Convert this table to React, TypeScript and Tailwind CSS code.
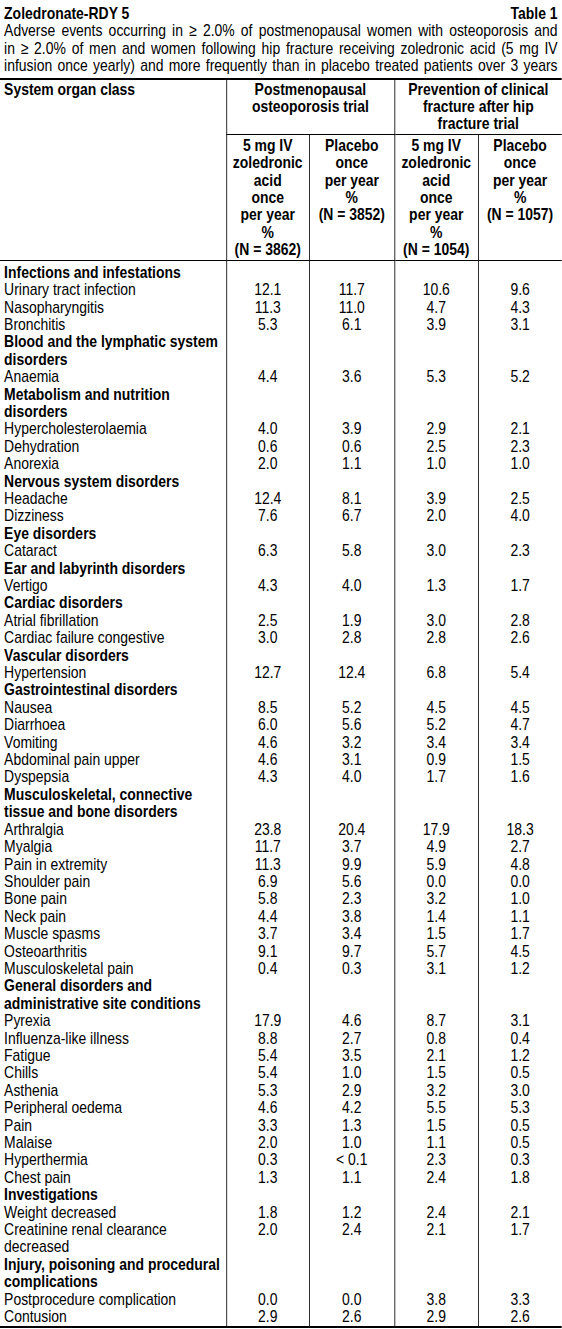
import React from "react";

type Row =
  | { kind: "cat"; lines: string[] }
  | { kind: "item"; lines: string[]; v: [string, string, string, string] };

const cat = (...lines: string[]): Row => ({ kind: "cat", lines });
const item = (label: string | string[], a: string, b: string, c: string, d: string): Row => ({
  kind: "item",
  lines: Array.isArray(label) ? label : [label],
  v: [a, b, c, d],
});

const rows: Row[] = [
  cat("Infections and infestations"),
  item("Urinary tract infection", "12.1", "11.7", "10.6", "9.6"),
  item("Nasopharyngitis", "11.3", "11.0", "4.7", "4.3"),
  item("Bronchitis", "5.3", "6.1", "3.9", "3.1"),
  cat("Blood and the lymphatic system", "disorders"),
  item("Anaemia", "4.4", "3.6", "5.3", "5.2"),
  cat("Metabolism and nutrition", "disorders"),
  item("Hypercholesterolaemia", "4.0", "3.9", "2.9", "2.1"),
  item("Dehydration", "0.6", "0.6", "2.5", "2.3"),
  item("Anorexia", "2.0", "1.1", "1.0", "1.0"),
  cat("Nervous system disorders"),
  item("Headache", "12.4", "8.1", "3.9", "2.5"),
  item("Dizziness", "7.6", "6.7", "2.0", "4.0"),
  cat("Eye disorders"),
  item("Cataract", "6.3", "5.8", "3.0", "2.3"),
  cat("Ear and labyrinth disorders"),
  item("Vertigo", "4.3", "4.0", "1.3", "1.7"),
  cat("Cardiac disorders"),
  item("Atrial fibrillation", "2.5", "1.9", "3.0", "2.8"),
  item("Cardiac failure congestive", "3.0", "2.8", "2.8", "2.6"),
  cat("Vascular disorders"),
  item("Hypertension", "12.7", "12.4", "6.8", "5.4"),
  cat("Gastrointestinal disorders"),
  item("Nausea", "8.5", "5.2", "4.5", "4.5"),
  item("Diarrhoea", "6.0", "5.6", "5.2", "4.7"),
  item("Vomiting", "4.6", "3.2", "3.4", "3.4"),
  item("Abdominal pain upper", "4.6", "3.1", "0.9", "1.5"),
  item("Dyspepsia", "4.3", "4.0", "1.7", "1.6"),
  cat("Musculoskeletal, connective", "tissue and bone disorders"),
  item("Arthralgia", "23.8", "20.4", "17.9", "18.3"),
  item("Myalgia", "11.7", "3.7", "4.9", "2.7"),
  item("Pain in extremity", "11.3", "9.9", "5.9", "4.8"),
  item("Shoulder pain", "6.9", "5.6", "0.0", "0.0"),
  item("Bone pain", "5.8", "2.3", "3.2", "1.0"),
  item("Neck pain", "4.4", "3.8", "1.4", "1.1"),
  item("Muscle spasms", "3.7", "3.4", "1.5", "1.7"),
  item("Osteoarthritis", "9.1", "9.7", "5.7", "4.5"),
  item("Musculoskeletal pain", "0.4", "0.3", "3.1", "1.2"),
  cat("General disorders and", "administrative site conditions"),
  item("Pyrexia", "17.9", "4.6", "8.7", "3.1"),
  item("Influenza-like illness", "8.8", "2.7", "0.8", "0.4"),
  item("Fatigue", "5.4", "3.5", "2.1", "1.2"),
  item("Chills", "5.4", "1.0", "1.5", "0.5"),
  item("Asthenia", "5.3", "2.9", "3.2", "3.0"),
  item("Peripheral oedema", "4.6", "4.2", "5.5", "5.3"),
  item("Pain", "3.3", "1.3", "1.5", "0.5"),
  item("Malaise", "2.0", "1.0", "1.1", "0.5"),
  item("Hyperthermia", "0.3", "< 0.1", "2.3", "0.3"),
  item("Chest pain", "1.3", "1.1", "2.4", "1.8"),
  cat("Investigations"),
  item("Weight decreased", "1.8", "1.2", "2.4", "2.1"),
  item(["Creatinine renal clearance", "decreased"], "2.0", "2.4", "2.1", "1.7"),
  cat("Injury, poisoning and procedural", "complications"),
  item("Postprocedure complication", "0.0", "0.0", "3.8", "3.3"),
  item("Contusion", "2.9", "2.6", "2.9", "2.6"),
];

const Lines = ({ lines }: { lines: string[] }) => (
  <>
    {lines.map((l, i) => (
      <React.Fragment key={i}>
        {i > 0 && <br />}
        {l}
      </React.Fragment>
    ))}
  </>
);

const subHead = "border-l-[1.25px] border-b-[1.25px] border-black pt-[2px] pb-[1px] align-top font-bold whitespace-nowrap";

export default function App() {
  return (
    <div className="w-[562px] h-[1329px] overflow-hidden bg-white">
      {/* Arial-metric text compressed horizontally to match the condensed face */}
      <div className="w-[685px] origin-top-left scale-x-[0.82] text-black [font-family:'Liberation_Sans',Arial,sans-serif] text-[17px] leading-[17.4px]">
        <div className="px-[5px] pt-[5px]">
          <div className="flex justify-between font-bold">
            <span>Zoledronate-RDY 5</span>
            <span>Table 1</span>
          </div>
          <div className="whitespace-nowrap text-justify [text-align-last:justify]">
            Adverse events occurring in ≥ 2.0% of postmenopausal women with osteoporosis and
          </div>
          <div className="whitespace-nowrap text-justify [text-align-last:justify]">
            in ≥ 2.0% of men and women following hip fracture receiving zoledronic acid (5 mg IV
          </div>
          <div className="whitespace-nowrap text-justify [text-align-last:justify]">
            infusion once yearly) and more frequently than in placebo treated patients over 3 years
          </div>
        </div>
        <table className="mt-[3px] w-full table-fixed border-collapse border-t-2 border-b-2 border-black">
          <colgroup>
            <col className="w-[276px]" />
            <col className="w-[101px]" />
            <col className="w-[104px]" />
            <col className="w-[102px]" />
            <col />
          </colgroup>
          <thead>
            <tr>
              <th
                rowSpan={2}
                className="border-b-[1.25px] border-black pl-[5px] pt-[1px] text-left align-top font-bold whitespace-nowrap"
              >
                System organ class
              </th>
              <th
                colSpan={2}
                className="border-l-[1.25px] border-b-[1.25px] border-black pt-[1px] pb-[1px] align-top font-bold whitespace-nowrap"
              >
                Postmenopausal
                <br />
                osteoporosis trial
              </th>
              <th
                colSpan={2}
                className="border-l-[1.25px] border-b-[1.25px] border-black pt-[1px] pb-[1px] align-top font-bold whitespace-nowrap"
              >
                Prevention of clinical
                <br />
                fracture after hip
                <br />
                fracture trial
              </th>
            </tr>
            <tr>
              <th className={subHead}>
                5 mg IV
                <br />
                zoledronic
                <br />
                acid
                <br />
                once
                <br />
                per year
                <br />%<br />
                (N = 3862)
              </th>
              <th className={subHead}>
                Placebo
                <br />
                once
                <br />
                per year
                <br />%<br />
                (N = 3852)
              </th>
              <th className={subHead}>
                5 mg IV
                <br />
                zoledronic
                <br />
                acid
                <br />
                once
                <br />
                per year
                <br />%<br />
                (N = 1054)
              </th>
              <th className={subHead}>
                Placebo
                <br />
                once
                <br />
                per year
                <br />%<br />
                (N = 1057)
              </th>
            </tr>
          </thead>
          <tbody>
            {rows.map((r, i) => {
              const first = i === 0 ? "pt-[3px]" : "";
              const last = i === rows.length - 1 ? "pb-[1px]" : "";
              return (
                <tr key={i}>
                  <td
                    className={`whitespace-nowrap p-0 pl-[5px] text-left align-top ${
                      r.kind === "cat" ? "font-bold" : ""
                    } ${first} ${last}`}
                  >
                    <Lines lines={r.lines} />
                  </td>
                  {[0, 1, 2, 3].map((k) => (
                    <td
                      key={k}
                      className={`border-l-[1.25px] border-black p-0 text-center align-top whitespace-nowrap ${first} ${last}`}
                    >
                      {r.kind === "item" ? r.v[k] : ""}
                    </td>
                  ))}
                </tr>
              );
            })}
          </tbody>
        </table>
      </div>
    </div>
  );
}
